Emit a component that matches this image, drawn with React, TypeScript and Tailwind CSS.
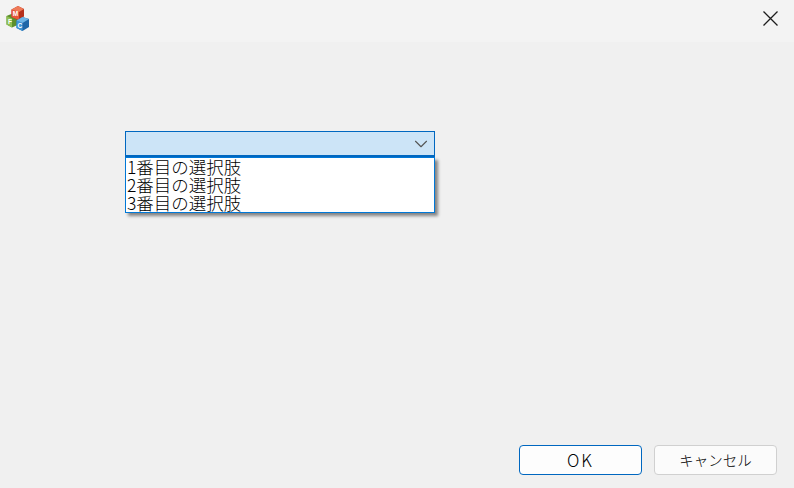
import React from 'react';
import { ChevronDown } from 'lucide-react';

const options = ['1番目の選択肢', '2番目の選択肢', '3番目の選択肢'];

// viewBox is in page pixels so the cubes can be read straight off the screenshot
function AppIcon() {
  return (
    <svg width="26" height="28" viewBox="5 5 26 28" className="block">
      {/* green block */}
      <path d="M6.5 16l6-2.5 5 2.5v9l-5.5 2.5-5.5-3z" fill="#5c8f2c" />
      <path d="M6.5 16l5.5 2.5v9l-5.5-3z" fill="#8fbf52" />
      {/* red block */}
      <path d="M11.5 9.5L18 6l6 3v7.5L18 20l-6.5-3z" fill="#b5301c" />
      <path d="M11.5 9.5L19 12v8l-7.500-3z" fill="#e8583a" />
      <path d="M11.500 9.500L18 6l6 3-5 3z" fill="#ef7a58" />
      {/* blue block */}
      <path d="M16.500 20.500l6-3.500 6.500 2v8l-6.500 4-6-3z" fill="#1f66a8" />
      <path d="M16.500 20.500l6 2.500v8l-6-3z" fill="#3f95d6" />
      <path d="M16.500 20.500l6-3.500 6.500 2-6.500 4z" fill="#6db4e6" />
      <text x="12.800" y="16" fontSize="6.500" fontWeight="700" fill="#fff" fontFamily="Liberation Sans">M</text>
      <text x="8" y="24" fontSize="6.500" fontWeight="700" fill="#fff" fontFamily="Liberation Sans">F</text>
      <text x="17.500" y="28" fontSize="6.500" fontWeight="700" fill="#fff" fontFamily="Liberation Sans">C</text>
    </svg>
  );
}

export default function App() {
  return (
    <div className="w-[794px] h-[488px] flex flex-col bg-[#f0f0f0] overflow-hidden font-['Noto_Sans_CJK_JP','Liberation_Sans',sans-serif] text-black">
      {/* Title bar */}
      <div className="h-[42px] shrink-0 flex items-start justify-between bg-[#f3f3f3] pl-[5px] pr-[16px]">
        <div className="pt-[5px]">
          <AppIcon />
        </div>
        <div className="pt-[11px]">
          <svg width="15" height="15" viewBox="0 0 15 15" className="block">
            <path d="M0.500 0.500l14 14M14.500 0.500l-14 14" stroke="#1c1c1c" strokeWidth="1.300" fill="none" />
          </svg>
        </div>
      </div>

      {/* Body */}
      <div className="flex-1 flex flex-col justify-between pl-[125px] pr-[17px] pt-[89px] pb-[13px]">
        <div className="w-[310px]">
          <div className="h-[26px] flex items-center justify-end bg-[#cce4f7] border border-[#0067c0] border-b-2 pr-[2px]">
            <ChevronDown size={22} strokeWidth={1.2} className="text-[#555555]" />
          </div>
          <div className="h-[56px] bg-white border border-[#0078d7] flex flex-col shadow-[3px_3px_3px_rgba(0,0,0,0.45)]">
            {options.map(option => (
              <div key={option} className="h-[18px] leading-[18px] text-[17.500px] font-light pl-[1px] whitespace-nowrap">
                {option}
              </div>
            ))}
          </div>
        </div>

        <div className="flex justify-end gap-[12px]">
          <button className="w-[123px] h-[30px] rounded-[4px] bg-[#fdfdfd] border border-[#0067c0] text-[17px] font-light tracking-[2px]">
            OK
          </button>
          <button className="w-[123px] h-[30px] rounded-[4px] bg-[#fbfbfb] border border-[#d0d0d0] text-[14.500px] font-light">
            キャンセル
          </button>
        </div>
      </div>
    </div>
  );
}
